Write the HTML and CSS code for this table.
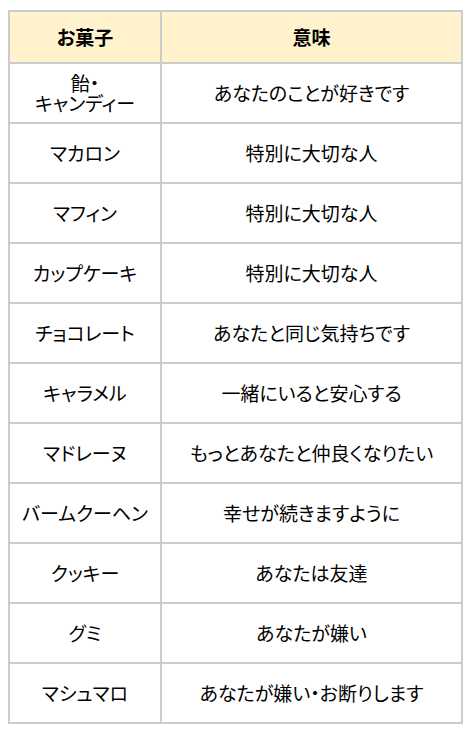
FILE: index.html
```html
<!DOCTYPE html>
<html lang="ja">
<head>
<meta charset="utf-8">
<link rel="stylesheet" href="styles.css">
</head>
<body>
<table class="sweets">
  <thead>
    <tr><th class="c1">お菓子</th><th class="c2">意味</th></tr>
  </thead>
  <tbody>
    <tr><td>飴・<br>キャンディー</td><td>あなたのことが好きです</td></tr>
    <tr><td>マカロン</td><td>特別に大切な人</td></tr>
    <tr><td>マフィン</td><td>特別に大切な人</td></tr>
    <tr><td>カップケーキ</td><td>特別に大切な人</td></tr>
    <tr><td>チョコレート</td><td>あなたと同じ気持ちです</td></tr>
    <tr><td>キャラメル</td><td>一緒にいると安心する</td></tr>
    <tr><td>マドレーヌ</td><td>もっとあなたと仲良くなりたい</td></tr>
    <tr><td>バームクーヘン</td><td>幸せが続きますように</td></tr>
    <tr><td>クッキー</td><td>あなたは友達</td></tr>
    <tr><td>グミ</td><td>あなたが嫌い</td></tr>
    <tr><td>マシュマロ</td><td>あなたが嫌い・お断りします</td></tr>
  </tbody>
</table>
</body>
</html>
```

FILE: styles.css
```css
html, body {
  margin: 0;
  padding: 0;
  background: #ffffff;
}
body {
  padding: 10px 0 0 8px;
  font-family: "Noto Sans CJK JP", "Noto Sans", sans-serif;
  font-size: 19px;
  color: #000000;
}
.sweets {
  border-collapse: collapse;
  width: 455px;
  table-layout: fixed;
}
.sweets th,
.sweets td {
  border: 2px solid #cccccc;
  text-align: center;
  vertical-align: middle;
  padding: 0 4px;
  line-height: 20px;
  font-weight: normal;
  font-feature-settings: "palt" 1;
}
.sweets th {
  background: #fff2cc;
  font-weight: bold;
  height: 50px;
}
.sweets td {
  height: 58px;
}
.c1 { width: 142px; }
.c2 { width: auto; }
```
